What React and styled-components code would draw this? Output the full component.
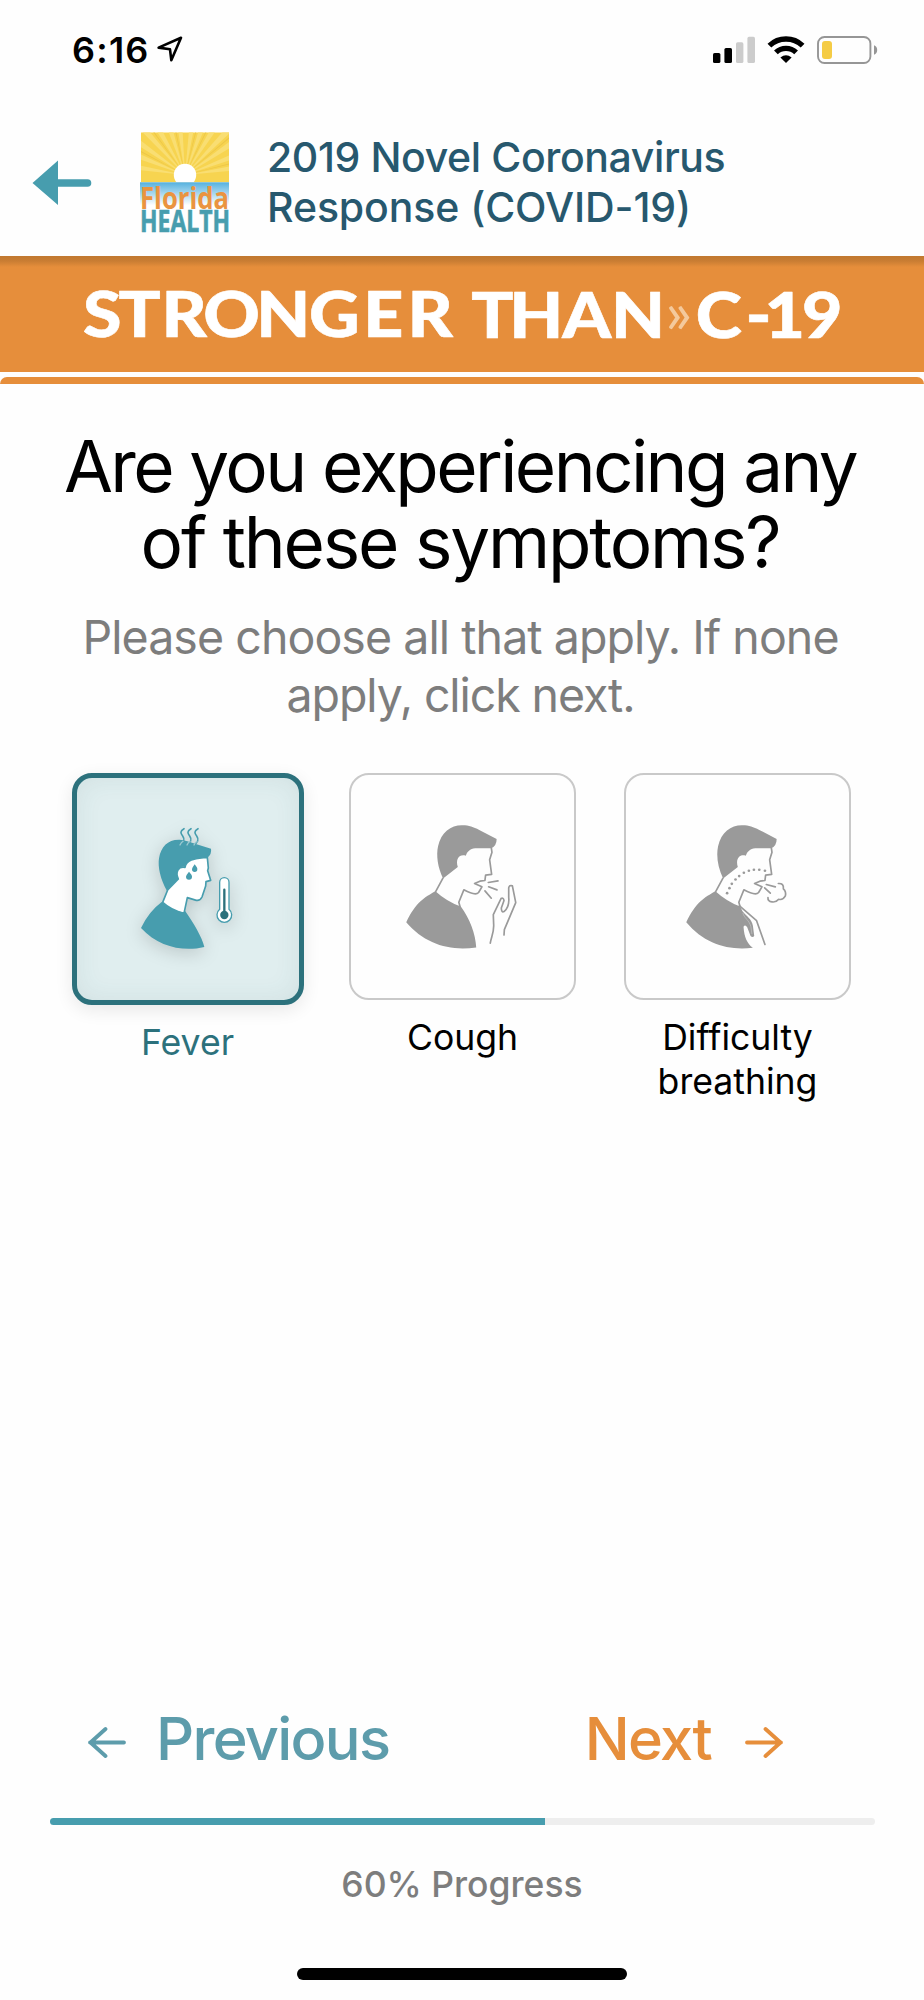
import React from 'react'

import styled, { createGlobalStyle } from 'styled-components'

const TEAL = '#479dae'
const DARK_TEAL = '#2c717c'
const ORANGE = '#e68e3b'
const GRAY = '#9a9a9a'

/* ------- ICONS ------- */

const LocationIcon = () => (
  <svg width="26" height="27" viewBox="0 0 26 27" fill="none" stroke="#000" strokeWidth="2.6" strokeLinejoin="round">
    <path d="M1.6 11.6 24 1.8 14.3 24.2 13 13.3Z" />
  </svg>
)

const SignalIcon = () => (
  <svg width="42" height="28" viewBox="0 0 42 28">
    <rect x="0" y="17" width="7.4" height="10" rx="1.6" />
    <rect x="11.4" y="12" width="7.6" height="15" rx="1.6" />
    <rect x="23" y="6.3" width="7.4" height="20.7" rx="1.6" fill="#ccc" />
    <rect x="34.4" y="0.8" width="7.6" height="26.2" rx="1.6" fill="#ccc" />
  </svg>
)

const WifiIcon = () => (
  <svg width="38" height="28" viewBox="0 0 38 28" fill="none" stroke="#000" strokeWidth="5.4">
    <path d="M2.4 9.6A24 24 0 0 1 35.6 9.6" />
    <path d="M8.9 16.4A14.6 14.6 0 0 1 29.1 16.4" />
    <path d="M13.4 21.4Q19 17 24.6 21.4L19 27Z" fill="#000" stroke="none" />
  </svg>
)

const BatteryIcon = () => (
  <svg width="61" height="28" viewBox="0 0 61 28">
    <rect x="1" y="1" width="52.4" height="26" rx="6.5" fill="none" stroke="#969696" strokeWidth="1.9" />
    <rect x="5" y="5" width="10" height="18" rx="3" fill="#f5cc45" />
    <path d="M57 9.2Q60.2 10.5 60.2 14T57 18.8Z" fill="#969696" />
  </svg>
)

const BackIcon = () => (
  <svg width="60" height="46" viewBox="0 0 60 46" fill={TEAL}>
    <path d="M0.5 23 26 0.5V19.2H55.5a3.8 3.8 0 0 1 0 7.6H26V45Z" />
  </svg>
)

const RAYS = [8, 21, 34, 46, 58, 70, 82, 96, 108, 120, 132, 145, 158, 171]

const HealthLogo = () => (
  <svg width="90" height="101" viewBox="0 0 90 101" overflow="visible">
    <defs>
      <linearGradient id="sky" x1="0" y1="0" x2="0" y2="1">
        <stop offset="0" stopColor="#55b1df" />
        <stop offset="0.85" stopColor="#fff" />
      </linearGradient>
      <clipPath id="sun">
        <rect x="1" y="0.5" width="88" height="49.8" />
      </clipPath>
    </defs>
    <g clipPath="url(#sun)">
      <rect width="90" height="51" fill="#f7d450" />
      {RAYS.map((angle) => (
        <path
          key={angle}
          d="M45 43 145 38V48Z"
          fill="#f9de72"
          transform={`rotate(${-angle} 45 43)`} />
      ))}
      {[14, 40, 64, 76, 102, 126, 152].map((angle) => (
        <path
          key={angle}
          d="M45 43 145 42V44Z"
          fill="#ecc648"
          transform={`rotate(${-angle} 45 43)`} />
      ))}
      <circle cx="45" cy="43" r="11.2" fill="#fff" />
    </g>
    <rect y="50.3" width="89" height="27" fill="url(#sky)" />
    <g fontWeight="700" fontFamily="'Open Sans', sans-serif">
      <text x="0" y="77" fontSize="30.5" textLength="89" lengthAdjust="spacingAndGlyphs" fill="#ea9440">Florida</text>
      <text x="0" y="100.3" fontSize="29.5" textLength="90" lengthAdjust="spacingAndGlyphs" fill={TEAL} stroke={TEAL} strokeWidth="0.6">HEALTH</text>
    </g>
  </svg>
)

// letters are widened a little: 840 units across 924px
const BannerWordmark = () => (
  <svg
    width="924"
    height="116"
    viewBox="0 256 840 116"
    preserveAspectRatio="none"
    fontFamily="Lato, sans-serif"
    fontWeight="900"
    fontSize="63.5"
    textAnchor="middle"
    fill="#fff">
    <g stroke="#fff" strokeWidth="0.6" strokeLinejoin="round">
      <text y="337.5" x="93 127 167.5 210.5 257.5 304 348.5 391">STRONGER</text>
      <text y="338.5" x="447.5 487.5 533.5 580">THAN</text>
      <text y="338.5" x="653.5 689.5 713.5 747.5">C-19</text>
    </g>
    <text y="333" x="617" fontWeight="400" fontSize="58" fill="#f4c99c">»</text>
  </svg>
)

const ArrowIcon = ({ flip }) => (
  <svg
    width="38"
    height="33"
    viewBox="0 0 38 33"
    fill="none"
    stroke="currentColor"
    strokeWidth="3.8"
    strokeLinecap="round"
    strokeLinejoin="round">
    <path d={flip ? 'M2 16.5H36M20.5 3 35.5 16.5 20.5 30' : 'M36 16.5H2M17.5 3 2.5 16.5 17.5 30'} />
  </svg>
)

const FeverIcon = () => (
  <Figure viewBox="80 84 666 666" $raised>
    <path d="M350 423C330 388 322 350 326 325 332 290 352 268 388 269 402 269 420 277 434 281L482 296Q485 312 471 323C436 325 412 328 404 350 386 348 377 362 384 388Z" fill={TEAL} />
    <path d="M471 322 474 354 472 362 481 391 467 395 466 408 455 441Q449 453 438 451L411 443 401 490Q362 480 337 457L352 420 384 387C374 366 384 348 404 352 408 326 440 326 471 322Z" fill="#fff" stroke={TEAL} strokeWidth="5" strokeLinejoin="round" />
    <path d="M334 456Q362 482 404 489L404 482C430 520 455 560 462 591 400 606 325 592 272 534Q295 485 334 456Z" fill={TEAL} />
    <path d="M433 343Q442 354 441 358A8 8 0 0 1 425 358Q425 354 433 343ZM416 365Q426 376 425 380A9 9 0 0 1 407 380Q407 376 416 365Z" fill={TEAL} />
    <g fill="none" stroke={TEAL} strokeWidth="5" strokeLinecap="round">
      {[0, 21, 42].map((x) => (
        <g key={x} transform={`translate(${x} 0)`}>
          <path d="M401 236C388 243 391 251 397 258 405 269 400 278 388 284" />
          <path d="M398 274Q393 276 389 285" stroke="#9dcad2" strokeWidth="4" />
        </g>
      ))}
    </g>
    <path d="M508 397A14 14 0 0 1 536 397V478A22 22 0 1 1 508 478Z" fill="#fff" stroke={TEAL} strokeWidth="4" />
    <path d="M522 419V490" stroke={DARK_TEAL} strokeWidth="7" strokeLinecap="round" />
    <circle cx="522" cy="495" r="12.5" fill={DARK_TEAL} />
  </Figure>
)

// hair, profile and neck shared by the cough and breathing figures
const Head = () => (
  <>
    <path d="M340 384C324 352 319 315 325 288 334 245 365 224 398 225 418 225 430 230 448 239L500 266Q500 286 484 294L436 294C420 296 412 304 408 316 390 310 376 324 384 350Z" fill={GRAY} />
    <path d="M484 292 486 306 479 328 485 372 467 374 465 390 450 392 434 399 456 409 446 426Q437 437 402 418L387 455 391 469M340 382 317 425" fill="none" stroke={GRAY} strokeWidth="5" strokeLinejoin="round" />
  </>
)

const CoughIcon = () => (
  <Figure viewBox="65 75 666 666">
    <Head />
    <path d="M317 422Q350 452 393 468C420 505 437 550 439 590 360 602 285 580 230 515 258 455 285 440 317 422Z" fill={GRAY} />
    <g fill="none" stroke={GRAY} strokeWidth="5" strokeLinecap="round" strokeLinejoin="round">
      <path d="M475 396 504 391M476 409 501 418M465 421 484 443" />
      <path d="M481 577C483 560 493 545 491 520L490 492 513 444Q520 440 522 450L514 472Q514 487 522 483C532 475 538 460 536 440V412Q538 403 547 406L557 456 523 537 522 553" />
    </g>
  </Figure>
)

const DOTS = [[382, 428], [389, 413], [396, 400], [407, 387], [418, 377], [432, 367], [447, 361], [462, 358], [478, 358], [495, 361]]

const BreathingIcon = () => (
  <Figure viewBox="80 75 666 666">
    <g transform="translate(30 0)">
      <Head />
    </g>
    <path d="M347 422Q380 452 421 468L428 482C440 497 456 506 459 525L463 556Q458 562 452 556L442 530Q436 520 431 528C433 560 442 578 459 591 385 600 315 580 260 515 288 455 315 440 347 422Z" fill={GRAY} />
    {DOTS.map(([cx, cy]) => (
      <circle key={cx} cx={cx} cy={cy} r="4" fill={GRAY} />
    ))}
    <g fill="none" stroke={GRAY} strokeWidth="5" strokeLinecap="round" strokeLinejoin="round">
      <path d="M419 466 470 510 495 581" />
      <path d="M499 402 526 409M494 412 511 428" />
      <path d="M535 399Q552 398 550 415 559 423 556 436 548 450 536 446 528 456 516 454 503 452 504 441" />
    </g>
    <path d="M429 487C432 502 448 508 453 528L456 550" fill="none" stroke="#c4c4c4" strokeWidth="2" />
  </Figure>
)

const symptoms = [
  { label: 'Fever', icon: <FeverIcon />, selected: true },
  { label: 'Cough', icon: <CoughIcon /> },
  { label: 'Difficulty breathing', icon: <BreathingIcon /> },
]

const App = () => {
  const progress = 60

  return (
    <Screen>
      <GlobalStyle />
      <StatusBar>
        <Time>6:16</Time>
        <LocationIcon />
        <StatusIcons>
          <SignalIcon />
          <WifiIcon />
          <BatteryIcon />
        </StatusIcons>
      </StatusBar>
      <Header>
        <BackButton aria-label="Back">
          <BackIcon />
        </BackButton>
        <HealthLogo />
        <Title>
          <Line $spacing="-0.4px">2019 Novel Coronavirus</Line>
          <Line $spacing="-0.1px">Response (COVID-19)</Line>
        </Title>
      </Header>
      <Banner>
        <BannerWordmark />
      </Banner>
      <BannerEdge />
      <Main>
        <Question>
          <Line $spacing="-2.6px">Are you experiencing any</Line>
          <Line $spacing="-2.2px">of these symptoms?</Line>
        </Question>
        <Hint>
          <Line $spacing="-0.93px">Please choose all that apply. If none</Line>
          <Line $spacing="-1.1px">apply, click next.</Line>
        </Hint>
        <Symptoms>
          {symptoms.map(({ label, icon, selected }) => (
            <Symptom key={label} $selected={selected}>
              <Card $selected={selected}>{icon}</Card>
              <Label>{label}</Label>
            </Symptom>
          ))}
        </Symptoms>
      </Main>
      <Footer>
        <Navigation>
          <NavButton $color="#5d9cab" $gap="30px">
            <ArrowIcon />
            <span>Previous</span>
          </NavButton>
          <NavButton $color={ORANGE} $gap="34px">
            <span>Next</span>
            <ArrowIcon flip />
          </NavButton>
        </Navigation>
        <Track>
          <Fill style={{ width: `${progress}%` }} />
        </Track>
        <ProgressText>{progress}% Progress</ProgressText>
        <HomeIndicator />
      </Footer>
    </Screen>
  )
}

export default App

/* ------- STYLING ------- */

const GlobalStyle = createGlobalStyle`
  * {
    box-sizing: border-box;
  }
  body {
    margin: 0;
    background-color: #fefefe;
    font-family: Inter, sans-serif;
  }
  svg {
    display: block;
    flex-shrink: 0;
  }
`
const Screen = styled.div`
  width: 924px;
  height: 2000px;
  display: flex;
  flex-direction: column;
  background-color: #fefefe;
`
const StatusBar = styled.div`
  height: 132px;
  padding: 28px 46px 0 72px;
  display: flex;
  align-items: flex-start;

  svg {
    margin-top: 8px;
  }
`
const Time = styled.span`
  width: 85px;
  font-size: 36px;
  font-weight: 600;
  line-height: 44px;
  letter-spacing: 1.2px;
`
const StatusIcons = styled.div`
  margin-left: auto;
  display: flex;
  gap: 12px;
`
const Header = styled.header`
  height: 124px;
  padding-left: 32px;
  display: flex;
  align-items: flex-start;
`
const BackButton = styled.button`
  width: 108px;
  margin-top: 28px;
  padding: 0;
  border: none;
  background: none;
`
const Title = styled.h1`
  margin: 0 0 0 37px;
  font-size: 41px;
  font-weight: 500;
  line-height: 50px;
  color: #27586e;
`
const Banner = styled.div`
  height: 116px;
  background-color: ${ORANGE};
  background-image: linear-gradient(#c17830, #c97d33 5px, ${ORANGE} 11px);
`
const BannerEdge = styled.div`
  height: 7px;
  margin-top: 5px;
  border-radius: 8px 8px 0 0;
  background-color: ${ORANGE};
`
const Main = styled.main`
  padding: 44px 49px 0 50px;
  flex: 1;
`
const Question = styled.h2`
  margin: 0;
  padding-right: 5px;
  font-size: 71px;
  font-weight: 400;
  line-height: 76.3px;
  text-align: center;
  color: #000;
`
const Line = styled.span`
  display: block;
  white-space: nowrap;
  letter-spacing: ${({ $spacing }) => $spacing};
`
const Hint = styled.p`
  margin: 27px 0 49px;
  padding-right: 4px;
  font-size: 46.5px;
  line-height: 58.3px;
  text-align: center;
  color: #7d7d7d;
`
const Symptoms = styled.div`
  display: grid;
  grid-template-columns: repeat(3, 275px);
`
const Symptom = styled.div`
  display: flex;
  flex-direction: column;
  align-items: center;
  color: ${({ $selected }) => ($selected ? DARK_TEAL : '#000')};
`
const Card = styled.div`
  border: ${({ $selected }) => ($selected ? `5px solid ${DARK_TEAL}` : '2px solid #c9c9c9')};
  border-radius: 20px;
  background-color: ${({ $selected }) => ($selected ? '#e0eeef' : '#fefefe')};
  box-shadow: ${({ $selected }) => ($selected
    ? 'inset 0 0 26px rgba(60, 100, 100, 0.09), 0 5px 18px rgba(0, 0, 0, 0.09)'
    : 'none')};
`
const Figure = styled.svg`
  width: ${({ $raised }) => ($raised ? '222px' : '223px')};
  height: ${({ $raised }) => ($raised ? '222px' : '223px')};
  filter: ${({ $raised }) => ($raised ? 'drop-shadow(0 4px 9px rgba(0, 0, 0, 0.16))' : 'none')};
`
const Label = styled.span`
  width: 200px;
  margin-top: 16px;
  font-size: 35.6px;
  line-height: 44px;
  text-align: center;
`
const Footer = styled.footer`
  height: 298px;
  padding: 0 49px;
  display: flex;
  flex-direction: column;
  align-items: center;
`
const Navigation = styled.nav`
  width: 100%;
  padding: 0 92px 0 39px;
  display: flex;
  justify-content: space-between;
`
const NavButton = styled.button`
  padding: 0;
  border: none;
  background: none;
  display: flex;
  align-items: center;
  gap: ${({ $gap }) => $gap};
  font-family: inherit;
  font-size: 59.5px;
  font-weight: 500;
  line-height: 72px;
  letter-spacing: -1.7px;
  color: ${({ $color }) => $color};

  svg {
    margin-top: 9px;
  }
`
const Track = styled.div`
  width: 825px;
  height: 7px;
  margin-top: 44px;
  border-radius: 4px;
  background-color: #eee;
  overflow: hidden;
`
const Fill = styled.div`
  height: 100%;
  background-color: ${TEAL};
`
const ProgressText = styled.span`
  margin-top: 38px;
  font-size: 35.5px;
  font-weight: 500;
  line-height: 44px;
  color: #7d7d7d;
`
const HomeIndicator = styled.div`
  width: 330px;
  height: 12px;
  margin-top: 61px;
  border-radius: 6px;
  background-color: #000;
`
